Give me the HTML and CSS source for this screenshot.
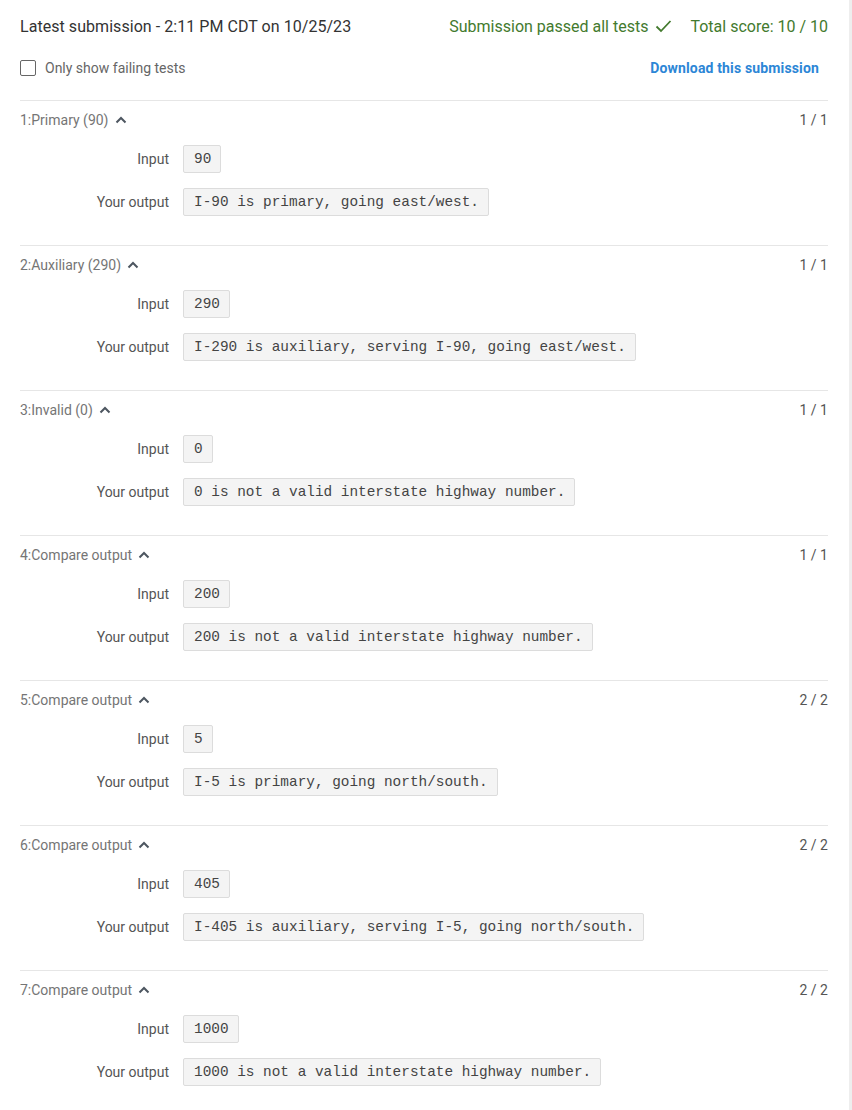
FILE: index.html
```html
<!DOCTYPE html>
<html>
<head>
<meta charset="utf-8">
<link rel="stylesheet" href="styles.css">
</head>
<body>
<div class="page">
  <div class="header">
    <div class="title">Latest submission - 2:11 PM CDT on 10/25/23</div>
    <div class="status">
      <span>Submission passed all tests</span>
      <svg class="check" width="17" height="14" viewBox="0 0 17 14"><path d="M1.5 7.5 L6 12 L15.5 2" fill="none" stroke="#437a2e" stroke-width="1.8"/></svg>
      <span class="total">Total score: 10 / 10</span>
    </div>
  </div>
  <div class="toolbar">
    <label class="chk"><span class="box"></span><span>Only show failing tests</span></label>
    <a class="download">Download this submission</a>
  </div>

  <div class="test">
    <div class="test-head"><span class="name">1:Primary (90)</span><svg class="chev" width="12" height="8" viewBox="0 0 12 8"><path d="M1.5 6.5 L6 2 L10.5 6.5" fill="none" stroke="#4d5660" stroke-width="2"/></svg><span class="score">1 / 1</span></div>
    <div class="row"><span class="lbl">Input</span><pre class="code">90</pre></div>
    <div class="row"><span class="lbl">Your output</span><pre class="code">I-90 is primary, going east/west.</pre></div>
  </div>

  <div class="test">
    <div class="test-head"><span class="name">2:Auxiliary (290)</span><svg class="chev" width="12" height="8" viewBox="0 0 12 8"><path d="M1.5 6.5 L6 2 L10.5 6.5" fill="none" stroke="#4d5660" stroke-width="2"/></svg><span class="score">1 / 1</span></div>
    <div class="row"><span class="lbl">Input</span><pre class="code">290</pre></div>
    <div class="row"><span class="lbl">Your output</span><pre class="code">I-290 is auxiliary, serving I-90, going east/west.</pre></div>
  </div>

  <div class="test">
    <div class="test-head"><span class="name">3:Invalid (0)</span><svg class="chev" width="12" height="8" viewBox="0 0 12 8"><path d="M1.5 6.5 L6 2 L10.5 6.5" fill="none" stroke="#4d5660" stroke-width="2"/></svg><span class="score">1 / 1</span></div>
    <div class="row"><span class="lbl">Input</span><pre class="code">0</pre></div>
    <div class="row"><span class="lbl">Your output</span><pre class="code">0 is not a valid interstate highway number.</pre></div>
  </div>

  <div class="test">
    <div class="test-head"><span class="name">4:Compare output</span><svg class="chev" width="12" height="8" viewBox="0 0 12 8"><path d="M1.5 6.5 L6 2 L10.5 6.5" fill="none" stroke="#4d5660" stroke-width="2"/></svg><span class="score">1 / 1</span></div>
    <div class="row"><span class="lbl">Input</span><pre class="code">200</pre></div>
    <div class="row"><span class="lbl">Your output</span><pre class="code">200 is not a valid interstate highway number.</pre></div>
  </div>

  <div class="test">
    <div class="test-head"><span class="name">5:Compare output</span><svg class="chev" width="12" height="8" viewBox="0 0 12 8"><path d="M1.5 6.5 L6 2 L10.5 6.5" fill="none" stroke="#4d5660" stroke-width="2"/></svg><span class="score">2 / 2</span></div>
    <div class="row"><span class="lbl">Input</span><pre class="code">5</pre></div>
    <div class="row"><span class="lbl">Your output</span><pre class="code">I-5 is primary, going north/south.</pre></div>
  </div>

  <div class="test">
    <div class="test-head"><span class="name">6:Compare output</span><svg class="chev" width="12" height="8" viewBox="0 0 12 8"><path d="M1.5 6.5 L6 2 L10.5 6.5" fill="none" stroke="#4d5660" stroke-width="2"/></svg><span class="score">2 / 2</span></div>
    <div class="row"><span class="lbl">Input</span><pre class="code">405</pre></div>
    <div class="row"><span class="lbl">Your output</span><pre class="code">I-405 is auxiliary, serving I-5, going north/south.</pre></div>
  </div>

  <div class="test">
    <div class="test-head"><span class="name">7:Compare output</span><svg class="chev" width="12" height="8" viewBox="0 0 12 8"><path d="M1.5 6.5 L6 2 L10.5 6.5" fill="none" stroke="#4d5660" stroke-width="2"/></svg><span class="score">2 / 2</span></div>
    <div class="row"><span class="lbl">Input</span><pre class="code">1000</pre></div>
    <div class="row"><span class="lbl">Your output</span><pre class="code">1000 is not a valid interstate highway number.</pre></div>
  </div>
</div>
</body>
</html>
```

FILE: styles.css
```css
html, body {
  margin: 0;
  padding: 0;
}
body {
  background: #eeeeee;
  font-family: Roboto, "Liberation Sans", sans-serif;
  color: #333;
}
.page {
  width: 849px;
  min-height: 1110px;
  box-sizing: border-box;
  background: #fff;
  padding: 0 21px 0 20px;
}
.header {
  height: 52px;
  display: flex;
  align-items: center;
  justify-content: space-between;
  font-size: 16px;
}
.title {
  color: #333;
  letter-spacing: 0.05px;
}
.status {
  display: flex;
  align-items: center;
  color: #437a2e;
}
.check {
  margin: 0 0 0 7px;
}
.total {
  margin-left: 18px;
}
.toolbar {
  height: 32px;
  margin-bottom: 16px;
  display: flex;
  align-items: center;
  justify-content: space-between;
  font-size: 14px;
}
.chk {
  display: flex;
  align-items: center;
  color: #666;
}
.box {
  width: 16px;
  height: 16px;
  box-sizing: border-box;
  border: 1px solid #666;
  border-radius: 2px;
  margin-right: 9px;
}
.download {
  font-weight: bold;
  color: #2c86d6;
  margin-right: 9px;
  letter-spacing: 0.15px;
}
.test {
  border-top: 1px solid #e6e6e6;
  padding-bottom: 29px;
}
.test-head {
  height: 36px;
  box-sizing: border-box;
  padding-top: 2px;
  display: flex;
  align-items: center;
  font-size: 14px;
  color: #757575;
}
.chev {
  margin-left: 6px;
}
.score {
  margin-left: auto;
  color: #555;
}
.row {
  display: grid;
  grid-template-columns: 149px auto;
  column-gap: 14px;
  align-items: center;
  justify-items: start;
  margin-top: 8px;
}
.row + .row {
  margin-top: 15px;
}
.lbl {
  justify-self: end;
  font-size: 14px;
  color: #555;
}
.code {
  margin: 0;
  font-family: "Liberation Mono", "Courier New", monospace;
  font-size: 14.4px;
  line-height: 25px;
  padding: 1px 9px 0 10px;
  border: 1px solid #dcdcdc;
  border-radius: 2px;
  background: #f4f4f4;
  color: #444;
}
```
